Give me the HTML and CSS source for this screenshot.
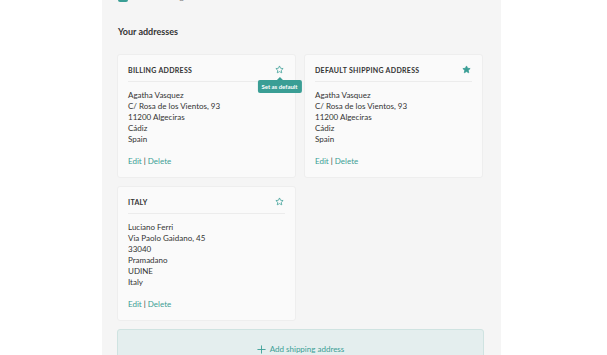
FILE: index.html
```html
<!DOCTYPE html>
<html lang="en">
<head>
    <meta charset="UTF-8">
    <meta name="viewport" content="width=device-width, initial-scale=1.0">
    <title>Addresses</title>
    <link rel="stylesheet" href="styles.css">
</head>
<body>
    <div class="panel">
        <!-- checkbox row, mostly scrolled off -->
        <div class="check-row">
            <span class="checkbox"></span>
            <span class="check-label">Use as billing address</span>
        </div>

        <h2>Your addresses</h2>

        <div class="cards">
            <div class="card">
                <div class="card-head">
                    <h3>Billing address</h3>
                    <span class="star">
                        <svg width="9" height="9" viewBox="0 0 24 24"><path d="M12 2.5l2.9 6.2 6.8.8-5 4.7 1.3 6.7L12 17.6l-6 3.3 1.3-6.7-5-4.7 6.8-.8z" fill="none" stroke="currentColor" stroke-width="2" stroke-linejoin="round"/></svg>
                        <span class="tooltip">Set as default</span>
                    </span>
                </div>
                <div class="card-body">
                    <p>Agatha Vasquez<br>C/ Rosa de los Vientos, 93<br>11200 Algeciras<br>Cádiz<br>Spain</p>
                    <div class="actions"><a href="#">Edit</a> | <a href="#">Delete</a></div>
                </div>
            </div>

            <div class="card">
                <div class="card-head">
                    <h3>Default shipping address</h3>
                    <span class="star">
                        <svg width="9" height="9" viewBox="0 0 24 24"><path d="M12 2.5l2.9 6.2 6.8.8-5 4.7 1.3 6.7L12 17.6l-6 3.3 1.3-6.7-5-4.7 6.8-.8z" fill="currentColor" stroke="currentColor" stroke-width="2" stroke-linejoin="round"/></svg>
                    </span>
                </div>
                <div class="card-body">
                    <p>Agatha Vasquez<br>C/ Rosa de los Vientos, 93<br>11200 Algeciras<br>Cádiz<br>Spain</p>
                    <div class="actions"><a href="#">Edit</a> | <a href="#">Delete</a></div>
                </div>
            </div>

            <div class="card">
                <div class="card-head">
                    <h3>Italy</h3>
                    <span class="star">
                        <svg width="9" height="9" viewBox="0 0 24 24"><path d="M12 2.5l2.9 6.2 6.8.8-5 4.7 1.3 6.7L12 17.6l-6 3.3 1.3-6.7-5-4.7 6.8-.8z" fill="none" stroke="currentColor" stroke-width="2" stroke-linejoin="round"/></svg>
                    </span>
                </div>
                <div class="card-body">
                    <p>Luciano Ferri<br>Via Paolo Gaidano, 45<br>33040<br>Pramadano<br>UDINE<br>Italy</p>
                    <div class="actions"><a href="#">Edit</a> | <a href="#">Delete</a></div>
                </div>
            </div>
        </div>

        <a class="add-btn" href="#">
            <svg width="9" height="9" viewBox="0 0 10 10"><path d="M5 0.5v9M0.5 5h9" stroke="currentColor" stroke-width="1"/></svg>
            Add shipping address
        </a>
    </div>
</body>
</html>
```

FILE: styles.css
```css
body {
    margin: 0;
    padding: 0;
    background: #fff;
    font-family: "Lato", "Noto Sans", sans-serif;
    color: #333;
    overflow: hidden;
}
.panel {
    width: 367px;
    margin-left: 102px;
    margin-top: -9px;
    padding: 0 17px 30px 15px;
    background: #f5f5f5;
    min-height: 380px;
}
.check-row {
    display: flex;
    align-items: center;
    gap: 10px;
    height: 11px;
}
.checkbox {
    width: 10px;
    height: 10px;
    border-radius: 2px;
    background: #3a9e95;
    margin-left: 1px;
}
.check-label {
    font-size: 8px;
    color: #777;
}
h2 {
    font-size: 9px;
    font-weight: 700;
    margin: 24px 0 17px 1px;
    color: #333;
}
.cards {
    display: grid;
    grid-template-columns: 179px 179px;
    gap: 8px 8px;
}
.card {
    background: #fafafa;
    border: 1px solid #eeeeee;
    border-radius: 3px;
    padding: 0 10px 10px 10px;
}
.card-head {
    display: flex;
    justify-content: space-between;
    align-items: center;
    padding: 10px 0 7px 0;
    border-bottom: 1px solid #ececec;
}
h3 {
    margin: 0;
    font-size: 7px;
    font-weight: 700;
    text-transform: uppercase;
    letter-spacing: 0.3px;
    color: #333;
}
.star {
    position: relative;
    color: #3a9e95;
    display: flex;
    margin-right: 1px;
}
.tooltip {
    position: absolute;
    top: 15px;
    left: 50%;
    transform: translateX(-50%);
    background: #3a9e95;
    color: #fff;
    font-size: 6px;
    font-weight: 700;
    white-space: nowrap;
    padding: 3px 4px;
    border-radius: 2px;
}
.tooltip::before {
    content: "";
    position: absolute;
    top: -3px;
    left: 50%;
    margin-left: -3px;
    border-left: 3px solid transparent;
    border-right: 3px solid transparent;
    border-bottom: 3px solid #3a9e95;
}
.card-body {
    padding-top: 8px;
}
.card-body p {
    margin: 0;
    font-size: 8px;
    line-height: 11px;
    color: #333;
}
.actions {
    margin-top: 11px;
    font-size: 8px;
    line-height: 11px;
    color: #333;
}
.actions a {
    color: #3a9e95;
    text-decoration: none;
}
.add-btn {
    display: flex;
    justify-content: center;
    align-items: center;
    gap: 4px;
    margin-top: 8px;
    height: 40px;
    box-sizing: border-box;
    background: #e4eeee;
    border: 1px solid #cfe3e1;
    border-radius: 3px;
    color: #3a9e95;
    font-size: 8px;
    text-decoration: none;
}
```
